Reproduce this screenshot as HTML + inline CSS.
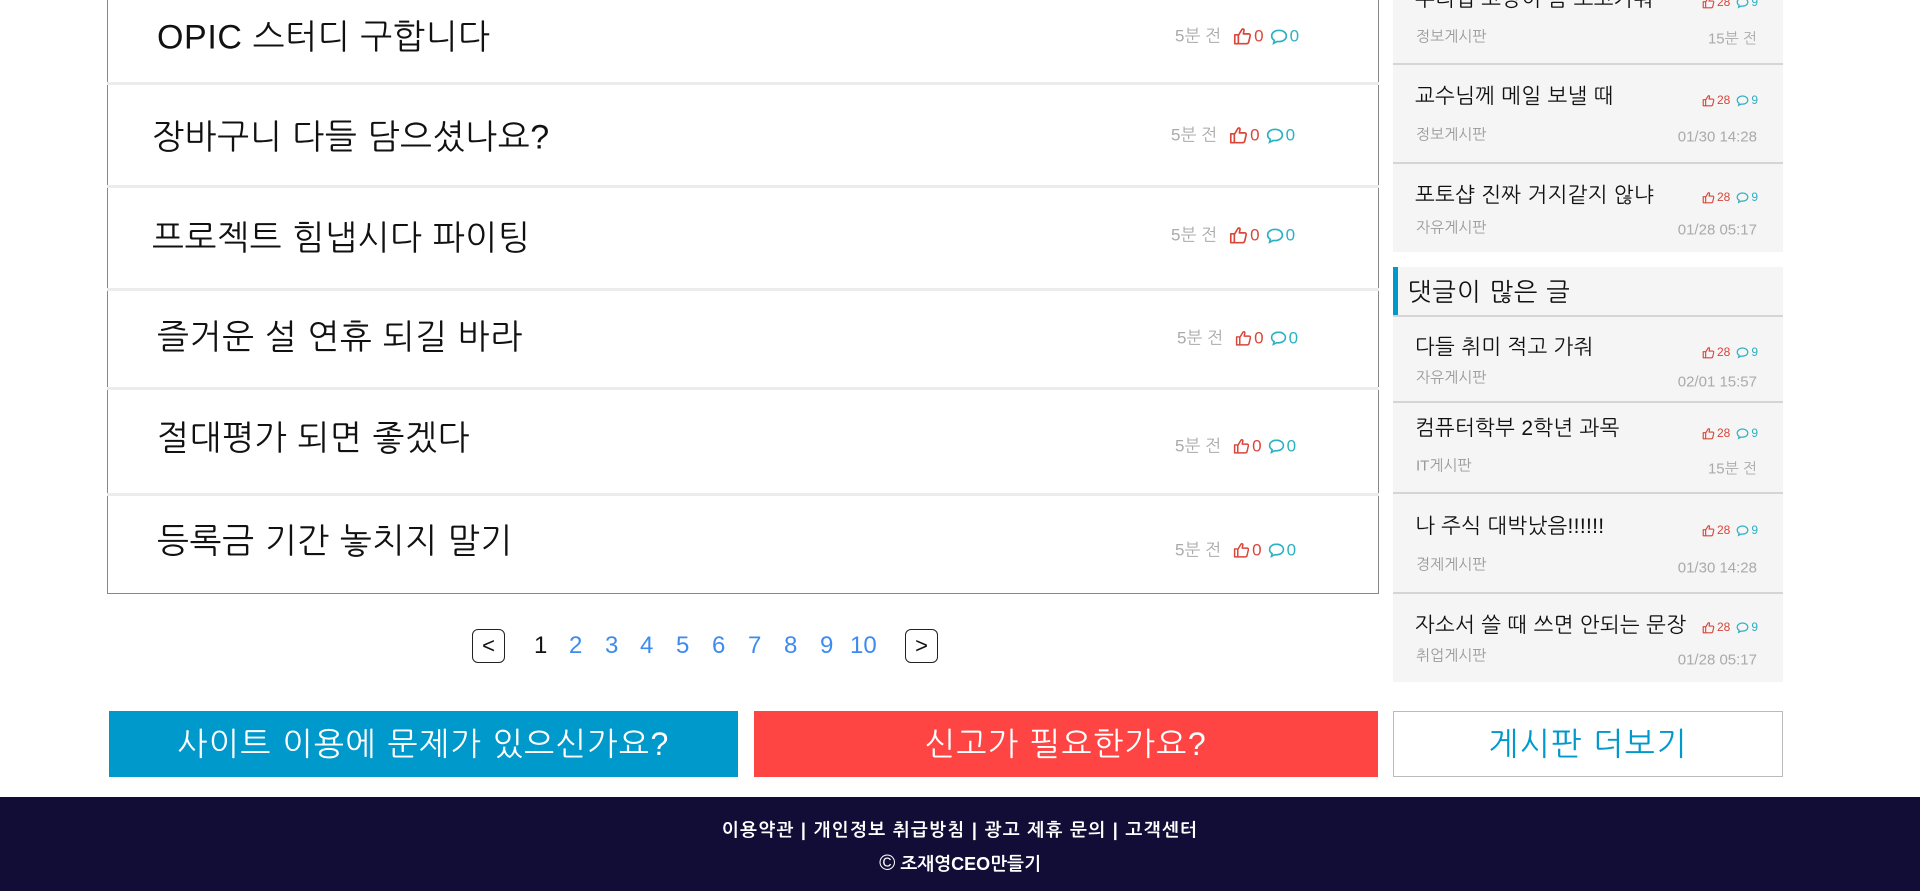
<!DOCTYPE html>
<html><head><meta charset="utf-8"><style>
*{margin:0;padding:0;box-sizing:border-box}
body{width:1920px;height:891px;position:relative;overflow:hidden;background:#fff;font-family:"Liberation Sans","NanumGothic","Noto Sans CJK KR",sans-serif;color:#111}
.a{position:absolute;white-space:nowrap}
.mid{transform:translateY(-50%)}
.list{position:absolute;left:107px;top:-10px;width:1272px;height:604px;border:1px solid #888;border-top:none}
.sep{position:absolute;left:107px;width:1272px;height:3px;background:#ececec}
.t{font-size:34px;color:#111;letter-spacing:0.6px}
.m{font-size:17px;color:#aaa;display:flex;align-items:center}
.m .u{color:#d9463a;margin-left:2px}
.m .c{color:#2bb0c4;margin-left:2px}
.m svg{margin-left:12px}
.m svg.b{margin-left:6px}
.side{position:absolute;left:1393px;width:390px;background:#f5f5f5}
.ssep{position:absolute;left:1393px;width:390px;height:2px;background:#d5d5d5}
.st{font-size:21px;color:#111;letter-spacing:0.3px}
.sc{font-size:15px;color:#999}
.sd{font-size:15px;color:#aaa;text-align:right;width:200px}
.si{font-size:12px;color:#d9463a;display:flex;align-items:center;gap:2px}
.si span{color:#2bb0c4}
.si svg.b{margin-left:4px}
.pg{font-size:24px;color:#3d8bf0}
.box{position:absolute;top:629px;width:33px;height:34px;border:1px solid #222;border-radius:6px;font-size:22px;text-align:center;line-height:32px}
</style></head><body>
<svg width="0" height="0" style="position:absolute">
<symbol id="th" viewBox="0 0 16 16"><path d="M1.5 7h3v7.5h-3z M4.5 7.5 L7.5 2.5 Q9 1.5 9.3 3 L8.7 6.2 H13.3 Q14.8 6.4 14.4 8 L13.2 13.2 Q12.8 14.5 11.5 14.5 H4.5" fill="none" stroke="#d9463a" stroke-width="1.4" stroke-linejoin="round"/></symbol>
<symbol id="bu" viewBox="0 0 16 16"><path d="M8 2.5C4.2 2.5 1.5 4.7 1.5 7.5c0 1.6.9 3 2.4 3.9L3.2 14l3.1-1.6c.5.1 1.1.1 1.7.1 3.800 0 6.5-2.2 6.5-5S11.8 2.5 8 2.5z" fill="none" stroke="#2bb0c4" stroke-width="1.5"/></symbol>
</svg>
<div class="list"></div>
<div class="sep" style="top:82px"></div>
<div class="sep" style="top:185px"></div>
<div class="sep" style="top:288px"></div>
<div class="sep" style="top:387px"></div>
<div class="sep" style="top:493px"></div>

<div class="a t mid" style="left:157px;top:37px">OPIC 스터디 구합니다</div>
<div class="a t mid" style="left:152px;top:137px">장바구니 다들 담으셨나요?</div>
<div class="a t mid" style="left:152px;top:238px">프로젝트 힘냅시다 파이팅</div>
<div class="a t mid" style="left:157px;top:337px">즐거운 설 연휴 되길 바라</div>
<div class="a t mid" style="left:157px;top:438px">절대평가 되면 좋겠다</div>
<div class="a t mid" style="left:157px;top:541px">등록금 기간 놓치지 말기</div>

<div class="a m mid" style="left:1175px;top:36px">5분 전<svg width="19" height="19"><use href="#th"/></svg><span class="u">0</span><svg class="b" width="18" height="18"><use href="#bu"/></svg><span class="c">0</span></div>
<div class="a m mid" style="left:1171px;top:135px">5분 전<svg width="19" height="19"><use href="#th"/></svg><span class="u">0</span><svg class="b" width="18" height="18"><use href="#bu"/></svg><span class="c">0</span></div>
<div class="a m mid" style="left:1171px;top:235px">5분 전<svg width="19" height="19"><use href="#th"/></svg><span class="u">0</span><svg class="b" width="18" height="18"><use href="#bu"/></svg><span class="c">0</span></div>
<div class="a m mid" style="left:1177px;top:338px">5분 전<svg width="17" height="17"><use href="#th"/></svg><span class="u">0</span><svg class="b" width="17" height="17"><use href="#bu"/></svg><span class="c">0</span></div>
<div class="a m mid" style="left:1175px;top:446px">5분 전<svg width="17" height="17"><use href="#th"/></svg><span class="u">0</span><svg class="b" width="17" height="17"><use href="#bu"/></svg><span class="c">0</span></div>
<div class="a m mid" style="left:1175px;top:550px">5분 전<svg width="17" height="17"><use href="#th"/></svg><span class="u">0</span><svg class="b" width="17" height="17"><use href="#bu"/></svg><span class="c">0</span></div>

<div class="side" style="top:0;height:252px"></div>
<div class="ssep" style="top:63px"></div>
<div class="ssep" style="top:162px"></div>
<div class="side" style="top:267px;height:415px"></div>
<div class="a" style="left:1393px;top:267px;width:5px;height:49px;background:#0099cc"></div>
<div class="ssep" style="top:315px"></div>
<div class="ssep" style="top:401px"></div>
<div class="ssep" style="top:492px"></div>
<div class="ssep" style="top:592px"></div>
<div class="a mid" style="left:1408px;top:292px;font-size:25px;letter-spacing:1px">댓글이 많은 글</div>

<div class="a st mid" style="left:1415px;top:0px">우리집 고양이 좀 보고가줘</div>
<div class="a sc mid" style="left:1416px;top:37px">정보게시판</div><div class="a sd mid" style="left:1557px;top:39px">15분 전</div>
<div class="a si mid" style="left:1702px;top:2px"><svg width="13" height="13"><use href="#th"/></svg>28<svg class="b" width="13" height="13"><use href="#bu"/></svg><span>9</span></div>
<div class="a st mid" style="left:1415px;top:97px">교수님께 메일 보낼 때</div>
<div class="a sc mid" style="left:1416px;top:135px">정보게시판</div><div class="a sd mid" style="left:1557px;top:137px">01/30 14:28</div>
<div class="a si mid" style="left:1702px;top:100px"><svg width="13" height="13"><use href="#th"/></svg>28<svg class="b" width="13" height="13"><use href="#bu"/></svg><span>9</span></div>
<div class="a st mid" style="left:1415px;top:196px">포토샵 진짜 거지같지 않냐</div>
<div class="a sc mid" style="left:1416px;top:228px">자유게시판</div><div class="a sd mid" style="left:1557px;top:230px">01/28 05:17</div>
<div class="a si mid" style="left:1702px;top:197px"><svg width="13" height="13"><use href="#th"/></svg>28<svg class="b" width="13" height="13"><use href="#bu"/></svg><span>9</span></div>

<div class="a st mid" style="left:1415px;top:348px">다들 취미 적고 가줘</div>
<div class="a sc mid" style="left:1416px;top:378px">자유게시판</div><div class="a sd mid" style="left:1557px;top:382px">02/01 15:57</div>
<div class="a si mid" style="left:1702px;top:352px"><svg width="13" height="13"><use href="#th"/></svg>28<svg class="b" width="13" height="13"><use href="#bu"/></svg><span>9</span></div>
<div class="a st mid" style="left:1415px;top:429px">컴퓨터학부 2학년 과목</div>
<div class="a sc mid" style="left:1416px;top:466px">IT게시판</div><div class="a sd mid" style="left:1557px;top:469px">15분 전</div>
<div class="a si mid" style="left:1702px;top:433px"><svg width="13" height="13"><use href="#th"/></svg>28<svg class="b" width="13" height="13"><use href="#bu"/></svg><span>9</span></div>
<div class="a st mid" style="left:1415px;top:527px">나 주식 대박났음!!!!!!</div>
<div class="a sc mid" style="left:1416px;top:565px">경제게시판</div><div class="a sd mid" style="left:1557px;top:568px">01/30 14:28</div>
<div class="a si mid" style="left:1702px;top:530px"><svg width="13" height="13"><use href="#th"/></svg>28<svg class="b" width="13" height="13"><use href="#bu"/></svg><span>9</span></div>
<div class="a st mid" style="left:1415px;top:626px">자소서 쓸 때 쓰면 안되는 문장</div>
<div class="a sc mid" style="left:1416px;top:656px">취업게시판</div><div class="a sd mid" style="left:1557px;top:660px">01/28 05:17</div>
<div class="a si mid" style="left:1702px;top:627px"><svg width="13" height="13"><use href="#th"/></svg>28<svg class="b" width="13" height="13"><use href="#bu"/></svg><span>9</span></div>

<div class="box" style="left:472px">&lt;</div>
<div class="box" style="left:905px">&gt;</div>
<div class="a pg mid" style="left:534px;top:646px"><span style="color:#111">1</span></div>
<div class="a pg mid" style="left:569px;top:646px">2</div>
<div class="a pg mid" style="left:605px;top:646px">3</div>
<div class="a pg mid" style="left:640px;top:646px">4</div>
<div class="a pg mid" style="left:676px;top:646px">5</div>
<div class="a pg mid" style="left:712px;top:646px">6</div>
<div class="a pg mid" style="left:748px;top:646px">7</div>
<div class="a pg mid" style="left:784px;top:646px">8</div>
<div class="a pg mid" style="left:820px;top:646px">9</div>
<div class="a pg mid" style="left:850px;top:646px">10</div>

<div class="a" style="left:109px;top:711px;width:629px;height:66px;background:#0099cc;color:#fff;font-size:32px;letter-spacing:1.5px;text-align:center;line-height:66px">사이트 이용에 문제가 있으신가요?</div>
<div class="a" style="left:754px;top:711px;width:624px;height:66px;background:#ff4444;color:#fff;font-size:32px;letter-spacing:1.5px;text-align:center;line-height:66px">신고가 필요한가요?</div>
<div class="a" style="left:1393px;top:711px;width:390px;height:66px;border:1px solid #bbb;color:#0099cc;font-size:32px;letter-spacing:1.5px;text-align:center;line-height:64px">게시판 더보기</div>

<div class="a" style="left:0;top:797px;width:1920px;height:94px;background:#110d37"></div>
<div class="a" style="left:0;top:820px;width:1920px;text-align:center;color:#fff;font-size:18px;font-weight:bold;letter-spacing:1.3px">이용약관 | 개인정보 취급방침 | 광고 제휴 문의 | 고객센터</div>
<div class="a" style="left:0;top:850px;width:1920px;text-align:center;color:#fff;font-size:18px;font-weight:bold"><span style="font-size:22px;font-weight:normal">©</span> 조재영CEO만들기</div>
</body></html>
